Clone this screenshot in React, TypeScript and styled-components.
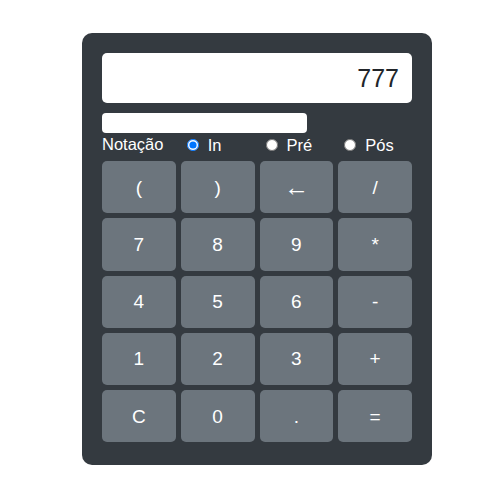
import React, { useState } from "react";
import styled, { createGlobalStyle } from "styled-components";

const GlobalStyle = createGlobalStyle`
  html, body { margin: 0; padding: 0; background: #ffffff; }
  body { font-family: "Liberation Sans", Arial, sans-serif; }
  * { box-sizing: border-box; }
`;

const Page = styled.div`
  padding: 33px 0 0 82px;
`;

const Calculator = styled.div`
  width: 350px;
  background: #343a40;
  border-radius: 10px;
  padding: 20px 20px 23px 20px;
  display: flex;
  flex-direction: column;
`;

const Display = styled.div`
  height: 50px;
  background: #ffffff;
  border-radius: 5px;
  display: flex;
  align-items: center;
  justify-content: flex-end;
  padding: 0 13px;
  font-size: 25px;
  color: #212529;
`;

const Expression = styled.div`
  margin-top: 10px;
  width: 205px;
  height: 20px;
  background: #ffffff;
  border-radius: 4px;
`;

const NotationRow = styled.div`
  display: grid;
  grid-template-columns: repeat(4, 1fr);
  column-gap: 5px;
  margin-top: 2px;
  height: 26px;
  align-items: start;
  color: #ffffff;
  font-size: 16.5px;
  line-height: 18px;
`;

const RadioLabel = styled.label`
  display: flex;
  align-items: center;
  padding-left: 6px;
  padding-top: 1px;
  cursor: pointer;
`;

const Radio = styled.input`
  width: 12px;
  height: 12px;
  margin: 0 9px 0 0;
`;

const Keypad = styled.div`
  display: grid;
  grid-template-columns: repeat(4, 1fr);
  gap: 5px;
`;

const Key = styled.button<{ $big?: boolean }>`
  height: 52.25px;
  border: none;
  border-radius: 5px;
  background: #6c757d;
  color: #ffffff;
  font-family: "Liberation Sans", Arial, sans-serif;
  font-size: ${(p) => (p.$big ? "25px" : "19px")};
  line-height: 1;
  padding: 0;
  cursor: pointer;
`;

const keys = ["(", ")", "←", "/", "7", "8", "9", "*", "4", "5", "6", "-", "1", "2", "3", "+", "C", "0", ".", "="];

export default function App() {
  const [mode, setMode] = useState("in");
  return (
    <>
      <GlobalStyle />
      <Page>
        <Calculator>
          <Display>777</Display>
          <Expression />
          <NotationRow>
            <span>Notação</span>
            <RadioLabel>
              <Radio type="radio" name="n" checked={mode === "in"} onChange={() => setMode("in")} />
              In
            </RadioLabel>
            <RadioLabel>
              <Radio type="radio" name="n" checked={mode === "pre"} onChange={() => setMode("pre")} />
              Pré
            </RadioLabel>
            <RadioLabel>
              <Radio type="radio" name="n" checked={mode === "pos"} onChange={() => setMode("pos")} />
              Pós
            </RadioLabel>
          </NotationRow>
          <Keypad>
            {keys.map((k) => (
              <Key key={k} $big={k === "←"}>{k}</Key>
            ))}
          </Keypad>
        </Calculator>
      </Page>
    </>
  );
}
